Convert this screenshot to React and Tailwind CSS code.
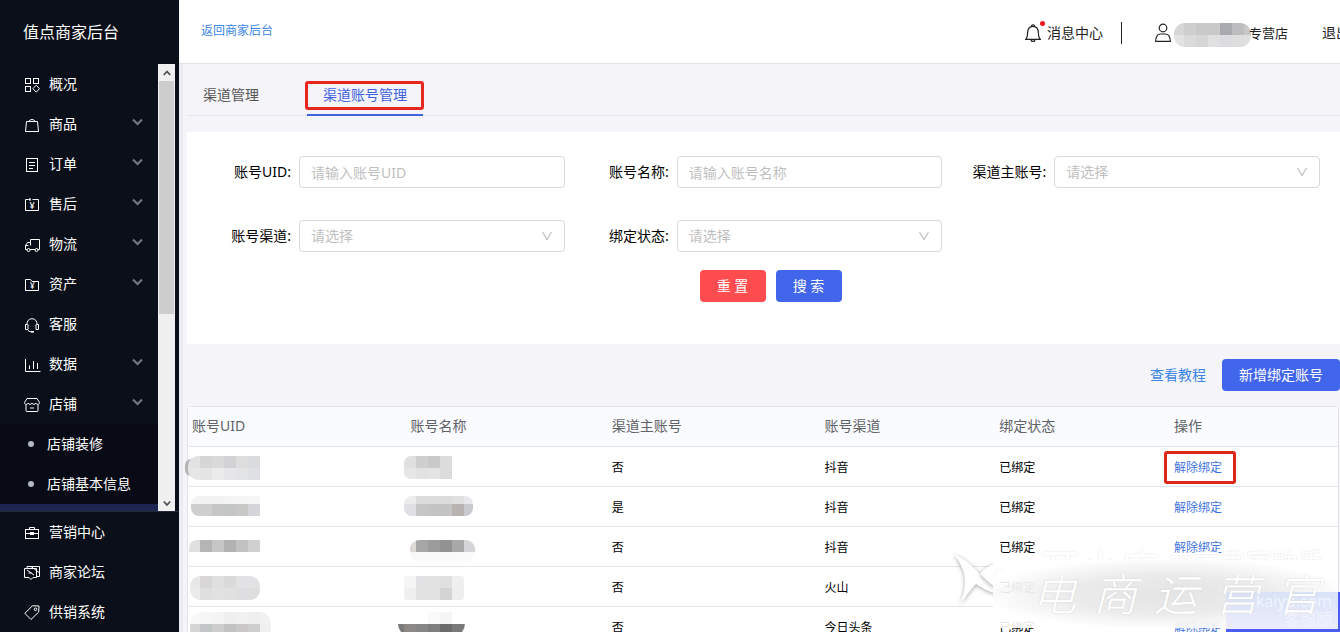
import { useState } from "react";
import clsx from "clsx";

const ICONS = {
  overview: (
    <>
      <rect x="1.5" y="2.5" width="5" height="5" />
      <rect x="9.5" y="2.5" width="5" height="5" />
      <rect x="1.5" y="10.5" width="5" height="5" />
      <path d="M12.2 9.2l3.3 3.5-3.3 3.5-3.3-3.5z" />
    </>
  ),
  goods: (
    <>
      <path d="M2.5 5.5h11l1 10h-13z" />
      <path d="M5 5.5c.3-2.6 5.7-2.6 6 0" />
    </>
  ),
  order: (
    <>
      <rect x="2.5" y="2.5" width="11" height="13" />
      <path d="M5 6.5h6M5 9.5h6M5 12.5h4" />
    </>
  ),
  aftersale: (
    <>
      <path d="M4.5 3.5h-3v11h13v-11h-6M6 2v3M4.5 3.5h2" />
      <text x="8.2" y="12.5" fontSize="9" textAnchor="middle" fill="currentColor" stroke="none">
        ¥
      </text>
    </>
  ),
  logistics: (
    <>
      <path d="M3 13.5H1.500V9.500l2-3H6.500V3.500h9v10H14M6 13.500h5M6.500 6.500v3M1.500 9.500h3" />
      <circle cx="4.500" cy="14" r="1.500" />
      <circle cx="12.500" cy="14" r="1.500" />
    </>
  ),
  assets: (
    <>
      <path d="M1.500 14.500v-11h5l1.500 2h6.500v9z" />
      <text x="8.200" y="13" fontSize="8" textAnchor="middle" fill="currentColor" stroke="none">
        ¥
      </text>
    </>
  ),
  service: (
    <>
      <path d="M3 8.500C2.500 .8 13.500.8 13 8.500M3.500 8.500h-2v5h2.500v-5M12.500 8.500h2v5h-2.500v-5M3.500 13.500c.8 1.600 2 2.200 4 2.200" />
      <path d="M7 15.800h3" strokeWidth="1.600" />
    </>
  ),
  data: <path d="M1.500 3v12.500h15M5.500 13V9.500M9.500 13V5M13.500 13V7" />,
  shop: (
    <>
      <path d="M3 2.500h10l2.500 4c0 2.400-3 2.400-3.700.5-.8 1.900-3 1.900-3.800 0-.8 1.900-3 1.900-3.800 0C3.500 8.900.5 8.900.5 6.500z" />
      <path d="M2 8.500v6.200c0 .6.300.8.800.8h10.400c.5 0 .8-.2.8-.8V8.500M6 12h4" />
    </>
  ),
  marketing: (
    <>
      <rect x="1.500" y="5.500" width="13" height="9" />
      <path d="M5.500 5.500v-2h5v2M1.500 9.500h4.500M10 9.500h4.500" />
      <rect x="6.500" y="8.500" width="3" height="2" fill="currentColor" />
    </>
  ),
  forum: (
    <>
      <path d="M.5 4.500h12v9h-3.500l-2 2-2-2H.5zM3 4.500v-2h12.500v10h-3" />
      <path d="M3 6l7 5M4.500 9h3M7 2.500l8 6" />
    </>
  ),
  supply: (
    <>
      <path d="M8.500 1.800l6.500.2-.3 6L7 15.500.8 9.300z" />
      <circle cx="11.500" cy="5.300" r="1.300" />
    </>
  ),
};

const NAV = [
  { icon: "overview", label: "概况" },
  { icon: "goods", label: "商品", open: true },
  { icon: "order", label: "订单", open: true },
  { icon: "aftersale", label: "售后", open: true },
  { icon: "logistics", label: "物流", open: true },
  { icon: "assets", label: "资产", open: true },
  { icon: "service", label: "客服" },
  { icon: "data", label: "数据", open: true },
  { icon: "shop", label: "店铺", open: true },
];

const SUB_NAV = ["店铺装修", "店铺基本信息"];

const BOTTOM_NAV = [
  { icon: "marketing", label: "营销中心" },
  { icon: "forum", label: "商家论坛" },
  { icon: "supply", label: "供销系统" },
];

// masks: x/y start of each strip, then one colour per 12px block
const ROWS = [
  {
    uid: {
      clip: [0, 9, 90, 24, 10],
      tail: true,
      strips: [
        [0, 9, 12, ["#e2e2e2", "#d6d6d6", "#dadada", "#d2d2d4", "#dedede", "#dadbdd"]],
        [0, 21, 12, ["#e6e6e6", "#e4e4e4", "#ebebeb", "#e6e6e8", "#e2e4e6", "#dfe0e3"]],
      ],
    },
    name: {
      clip: [-3, 9, 60, 23, 7],
      strips: [
        [-3, 9, 12, ["#e0e0e0", "#cfcfcf", "#c9c9c9", "#dcdcdc"]],
        [-3, 21, 11, ["#e6e6e6", "#e2e2e2", "#e4e4e4", "#dcdcdc"]],
      ],
    },
    main: "否",
    channel: "抖音",
    marked: true,
  },
  {
    uid: {
      clip: [3, 9, 90, 20, 8],
      strips: [
        [0, 9, 8, ["#f3f3f3", "#f2f2f2", "#f2f2f2", "#f4f4f4", "#f5f5f5", "#f6f6f6"]],
        [0, 17, 12, ["#cfcfcf", "#cfcfcf", "#c6c6c6", "#c4c6c6", "#c8c8c6", "#d6d6da"]],
      ],
    },
    name: {
      clip: [-3, 9, 69, 20, 8],
      strips: [
        [-3, 9, 8, ["#ececec", "#dcdcdc", "#dcdcdc", "#dcdcdc", "#e0e0e0", "#e8e8ec"]],
        [-3, 17, 12, ["#e0e0e4", "#c6c6c6", "#c4c4c4", "#c4c4c4", "#b8b2b0", "#c9c9d0"]],
      ],
    },
    main: "是",
    channel: "抖音",
  },
  {
    uid: {
      clip: [1, 13, 90, 20, 8],
      strips: [[0, 13, 12, ["#e0e0e0", "#b5b5b5", "#c6c6c6", "#b2b2b2", "#c2c2c2", "#d0d0d0"]]],
    },
    name: {
      clip: [3, 13, 65, 21, 9],
      strips: [
        [-3, 13, 12, ["#dcd8d4", "#a6a6a6", "#9c9c9c", "#929292", "#a8a8a8", "#d6d6d8"]],
        [-3, 25, 9, ["#f8f8f8", "#f9f9f9", "#f9f9f9", "#f9f9f9", "#fafafa", "#fafafa"]],
      ],
    },
    main: "否",
    channel: "抖音",
  },
  {
    uid: {
      clip: [2, 9, 70, 24, 10],
      strips: [
        [0, 9, 12, ["#e8e8e8", "#d8d6d6", "#e0e0e0", "#dadada", "#e2e2e4", "#e2e2e4"]],
        [0, 21, 12, ["#ebebeb", "#dfdfdf", "#e2e2e2", "#e0e0e0", "#dedee0", "#dedede"]],
      ],
    },
    name: {
      clip: [-3, 9, 60, 24, 3],
      strips: [
        [-3, 9, 12, ["#f5f5f5", "#e2e2e4", "#e2e2e2", "#e0e0e0", "#efefef"]],
        [-3, 21, 12, ["#efefef", "#e2e2e2", "#e2e2e2", "#d4d4d4", "#eeeeee"]],
      ],
    },
    main: "否",
    channel: "火山",
  },
  {
    uid: {
      clip: [2, 5, 81, 34, 12],
      strips: [
        [0, 5, 12, ["#f8f8f8", "#f6f6f6", "#f4f4f4", "#efefef", "#f1f1f1", "#efefef", "#f1f1f1"]],
        [0, 17, 12, ["#d6d6d6", "#c2c6c6", "#cdcdcd", "#c2c2c2", "#c9c7c7", "#cecece", "#f0f0f0"]],
      ],
    },
    name: {
      clip: [-9, 5, 67, 24, 12],
      strips: [
        [21, 5, 12, ["#fafafa", "#f5f5f5"]],
        [-15, 17, 12, ["#7a7a7a", "#8c8886", "#868686", "#7e7e7e", "#6c6c6c", "#7a7a7a", "#8a8a8a"]],
      ],
    },
    main: "否",
    channel: "今日头条",
  },
];

const COLUMNS = [
  { title: "账号UID", width: "w-[19%]" },
  { title: "账号名称", width: "w-[17.5%]" },
  { title: "渠道主账号", width: "w-[18.5%]" },
  { title: "账号渠道", width: "w-[15.2%]" },
  { title: "绑定状态", width: "w-[15.2%]" },
  { title: "操作", width: "" },
];

function Icon({ name }) {
  return (
    <svg
      className="size-4 shrink-0 overflow-visible"
      viewBox="0 0 16 16"
      fill="none"
      stroke="currentColor"
      aria-hidden
    >
      {ICONS[name]}
    </svg>
  );
}

function NavItem({ icon, label, open }) {
  return (
    <a href="#" className="flex h-10 shrink-0 items-center gap-[9px] pl-6 pr-[15px] text-white">
      <Icon name={icon} />
      <span>{label}</span>
      {open && (
        <svg
          className="ml-auto h-4 w-[11px] text-[#747982]"
          viewBox="0 0 11 16"
          fill="none"
          stroke="currentColor"
          strokeWidth="2"
          aria-hidden
        >
          <path d="M1 3.500l4.500 4.500L10 3.500" />
        </svg>
      )}
    </a>
  );
}

function Mask({ id, clip, strips, tail, className }) {
  const [x, y, w, h, r] = clip;
  return (
    <svg className={clsx("block overflow-visible", className)} aria-hidden>
      <clipPath id={id}>
        <rect x={x} y={y} width={w} height={h} rx={r} />
      </clipPath>
      {tail && <rect x="-3" y="12" width="12" height="17" rx="6" fill="#b5b5b5" />}
      <g clipPath={`url(#${id})`} shapeRendering="crispEdges">
        {strips.map(([sx, sy, sh, colors]) =>
          colors.map((c, i) => (
            <rect key={`${sy}-${i}`} x={sx + i * 12} y={sy} width="12" height={sh} fill={c} />
          ))
        )}
      </g>
    </svg>
  );
}

function Field({ id, label, children }) {
  return (
    <div className="flex items-center">
      <label htmlFor={id} className="w-28 shrink-0 pr-2 text-right text-black">
        {label}:
      </label>
      <div className="relative flex-1">{children}</div>
    </div>
  );
}

function TextField({ id, label, placeholder }) {
  return (
    <Field id={id} label={label}>
      <input
        id={id}
        type="text"
        placeholder={placeholder}
        className="block h-8 w-full rounded border border-[#d9d9d9] bg-white px-[11px] placeholder:text-[#bfbfbf] focus:border-[#4165eb] focus:outline-none"
      />
    </Field>
  );
}

function SelectField({ id, label }) {
  return (
    <Field id={id} label={label}>
      <select
        id={id}
        defaultValue=""
        className="block h-8 w-full appearance-none rounded border border-[#d9d9d9] bg-white px-[11px] text-[#bfbfbf] focus:border-[#4165eb] focus:outline-none"
      >
        <option value="">请选择</option>
      </select>
      <svg
        className="pointer-events-none absolute right-3 top-[11px] h-[10px] w-3 text-[#bfbfbf]"
        viewBox="0 0 12 10"
        fill="none"
        stroke="currentColor"
        strokeWidth="1.200"
        aria-hidden
      >
        <path d="M1.500 1L6 8.500 10.500 1" />
      </svg>
    </Field>
  );
}

function Sidebar() {
  return (
    <aside className="flex w-[179px] shrink-0 flex-col bg-[#0b0f19] text-sm leading-5 text-white">
      <h1 className="flex h-16 shrink-0 items-center pl-[23px] text-base">值点商家后台</h1>
      <div className="flex h-[447px] shrink-0 pr-1">
        <nav className="flex min-w-0 flex-1 flex-col overflow-hidden">
          {NAV.map((item) => (
            <NavItem key={item.label} {...item} />
          ))}
          {SUB_NAV.map((label) => (
            <a key={label} href="#" className="flex h-10 shrink-0 items-center gap-[13px] bg-[#080b15] pl-7">
              <span className="size-1.5 rounded-full bg-[#b4b8c0]" />
              {label}
            </a>
          ))}
          <div className="h-10 shrink-0 bg-[#1b254f]" />
        </nav>
        <div className="flex w-[17px] shrink-0 flex-col bg-[#f0f0f0] text-[#505050]">
          <button type="button" aria-label="向上滚动" className="grid h-[17px] place-items-center">
            <svg className="h-2 w-2" viewBox="0 0 8 8" fill="none" stroke="currentColor" strokeWidth="1.800" aria-hidden>
              <path d="M.8 6L4 2.500 7.200 6" />
            </svg>
          </button>
          <div className="mx-px h-[233px] bg-[#cdcdcd]" />
          <button type="button" aria-label="向下滚动" className="mt-auto grid h-[17px] place-items-center">
            <svg className="h-2 w-2" viewBox="0 0 8 8" fill="none" stroke="currentColor" strokeWidth="1.800" aria-hidden>
              <path d="M.8 2.500L4 6l3.200-3.500" />
            </svg>
          </button>
        </div>
      </div>
      <nav className="flex-1 border-t border-[#242a38]">
        {BOTTOM_NAV.map((item) => (
          <NavItem key={item.label} {...item} />
        ))}
      </nav>
    </aside>
  );
}

function Header() {
  return (
    <header className="flex h-16 shrink-0 items-center overflow-hidden border-b border-[#e2e2e8] bg-white pl-[22px] text-[#222]">
      <a href="#" className="pb-0.5 text-xs text-[#3b86e6]">
        返回商家后台
      </a>
      <div className="-mr-2.5 ml-auto flex shrink-0 items-center pt-0.5">
        <a href="#" className="flex items-center gap-1.5">
          <span className="relative">
            <svg className="h-5 w-4" viewBox="0 0 16 20" fill="none" stroke="currentColor" strokeWidth="1.200" aria-hidden>
              <path d="M.6 16.400h14.800c-1.800-1.500-1.900-3.400-2-6.400C13.300 5.800 11.500 3.300 8 3.300S2.700 5.800 2.600 10c-.1 3-.2 4.900-2 6.400z" />
              <path d="M6.300 3.300c.2-2 3.200-2 3.400 0M6 16.800c.3 2.200 3.700 2.200 4 0" />
            </svg>
            <span className="absolute -right-1 -top-0.5 size-[5px] rounded-full bg-[#f5151b]" />
          </span>
          消息中心
        </a>
        <span className="ml-[18px] h-[22px] w-px bg-[#222]" />
        <svg className="ml-[33px] h-5 w-4" viewBox="0 0 16 20" fill="none" stroke="currentColor" strokeWidth="1.200" aria-hidden>
          <circle cx="8" cy="5" r="3.800" />
          <path d="M.7 18.400c0-4.500 1.400-7 4.600-7.400h5.400c3.200.4 4.600 2.900 4.600 7.400z" />
        </svg>
        <Mask
          id="mask-shop"
          className="ml-[3px] h-5 w-[75px]"
          clip={[0, 0, 77, 24, 11]}
          strips={[
            [-2, 0, 12, ["#d6d6d6", "#cfcfcf", "#c9c9c9", "#c9c9c9", "#a9a9b0", "#bdbdbf", "#c8c8c8"]],
            [-2, 12, 12, ["#e2e2e4", "#dadada", "#d6d6d6", "#e0e0e0", "#dcdce0", "#dedede", "#e0e0e0"]],
          ]}
        />
        <span className="text-[13px]">专营店</span>
        <a href="#" className="ml-[34px]">
          退出
        </a>
      </div>
    </header>
  );
}

function Watermark() {
  return (
    <div className="pointer-events-none absolute bottom-0 right-0 h-[86px] w-[390px] overflow-hidden" aria-hidden>
      <div className="absolute bottom-0 right-0 h-10 w-[114px] bg-[#4b5df0]" />
      <svg className="absolute left-0 top-1.5 h-[60px] w-16" viewBox="0 0 64 60">
        <path
          d="M4 2c14 6 22 16 28 22 4 4 9 9 16 12v6c-9-2-16-6-22-10C22 36 17 43 10 52c5-12 6-22 4-31C12 14 8 8 4 2z"
          fill="#fff"
          className="drop-shadow-[0_1px_2px_rgba(0,0,0,0.35)]"
        />
        <path
          d="M30 22c4-6 10-10 24-11v4c-8 1-12 5-10 10 1 3 5 6 10 8v6C44 36 37 29 30 22z"
          fill="#fff"
          className="drop-shadow-[0_1px_2px_rgba(0,0,0,0.35)]"
        />
      </svg>
      <div className="absolute left-[90px] top-0 flex items-start gap-2 whitespace-nowrap text-white [text-shadow:0_0_2px_#ddd]">
        <span className="text-[40px] leading-[44px]">开小店</span>
        <span className="text-[26px] leading-[32px]">电商卖家助手</span>
      </div>
      <div className="absolute bottom-1 right-0.5 h-[68px] w-[345px] bg-white/90" />
      <div className="absolute bottom-1 right-0.5 h-[68px] w-[345px] bg-[radial-gradient(ellipse_at_center,#dedede_0%,#e6e6e6_40%,transparent_75%)] opacity-80" />
      <div className="absolute bottom-[3px] right-0.5 h-[37px] w-[112px] bg-linear-to-b from-[#d4e0f8]/80 to-[#ececfb]" />
      <div className="absolute bottom-[4px] right-2 text-right text-base leading-[18px] text-[#f0f4fe]">
        kaiyu.com
        <br />
        客服顺
      </div>
      <div className="absolute bottom-2 right-5 flex gap-[17px] text-[44px] font-light italic leading-[60px] text-white [text-shadow:0_0_2px_#d4d4d4]">
        {["电", "商", "运", "营", "官"].map((c) => (
          <span key={c}>{c}</span>
        ))}
      </div>
    </div>
  );
}

const App = () => {
  const [tab, setTab] = useState("account");

  const tabClass = (key) =>
    clsx(
      "relative -mb-px h-11 border-b-2 px-4 pt-1",
      tab === key ? "border-[#3f63e0] text-[#3f63e0]" : "border-transparent text-[#555]"
    );

  return (
    <div className="relative flex h-screen overflow-hidden bg-[#f4f4f9] font-['Noto_Sans','Noto_Sans_CJK_SC',sans-serif] text-sm leading-5">
      <Sidebar />
      <div className="flex min-w-0 flex-1 flex-col">
        <Header />
        <main className="flex-1 overflow-hidden border-l-4 border-[#ebebf4] pl-1">
          <div className="flex gap-8 border-b border-[#e4e5ec] pt-2" role="tablist">
            <button type="button" role="tab" aria-selected={tab === "channel"} className={tabClass("channel")} onClick={() => setTab("channel")}>
              渠道管理
            </button>
            <button type="button" role="tab" aria-selected={tab === "account"} className={tabClass("account")} onClick={() => setTab("account")}>
              渠道账号管理
              <span className="absolute -left-0.5 -right-px bottom-1 top-[9px] rounded-[3px] border-[3px] border-[#e8281e]" />
            </button>
          </div>

          <form className="mt-4 bg-white pb-[42px] pr-5 pt-6" onSubmit={(e) => e.preventDefault()}>
            <div className="grid grid-cols-3 gap-y-8">
              <TextField id="uid" label="账号UID" placeholder="请输入账号UID" />
              <TextField id="name" label="账号名称" placeholder="请输入账号名称" />
              <SelectField id="main" label="渠道主账号" />
              <SelectField id="channel" label="账号渠道" />
              <SelectField id="status" label="绑定状态" />
            </div>
            <div className="mt-[18px] flex justify-center gap-2.5 pl-[34px] text-white">
              <button type="reset" className="h-8 w-[66px] rounded bg-[#ff4d4f]">
                重 置
              </button>
              <button type="submit" className="h-8 w-[66px] rounded bg-[#4165eb]">
                搜 索
              </button>
            </div>
          </form>

          <div className="flex items-center justify-end gap-4 py-[15px]">
            <a href="#" className="text-[#3b86e6]">
              查看教程
            </a>
            <button type="button" className="h-8 rounded bg-[#4165eb] px-[17px] text-white">
              新增绑定账号
            </button>
          </div>

          <div className="mr-px rounded-t border border-[#e2e3e9] bg-white">
            <table className="w-full table-fixed text-left">
              <thead>
                <tr className="h-[39px] border-b border-[#e4e5ea] bg-[#fafbfe] text-[#606266]">
                  {COLUMNS.map((col) => (
                    <th key={col.title} className={clsx("p-0 pl-1 font-normal", col.width)}>
                      {col.title}
                    </th>
                  ))}
                </tr>
              </thead>
              <tbody className="text-xs text-black">
                {ROWS.map((row, i) => (
                  <tr key={i} className="h-10 border-b border-[#e4e5ea]">
                    <td className="p-0">
                      <Mask id={`mask-uid-${i}`} className="h-[39px] w-[90px]" {...row.uid} />
                    </td>
                    <td className="p-0">
                      <Mask id={`mask-name-${i}`} className="h-[39px] w-[90px]" {...row.name} />
                    </td>
                    <td className="p-0 pl-1 pt-1">{row.main}</td>
                    <td className="p-0 pl-1 pt-1">{row.channel}</td>
                    <td className="p-0 pl-1 pt-1">已绑定</td>
                    <td className="p-0 pl-1 pt-1">
                      <a href="#" className="relative text-[#3f74e0]">
                        解除绑定
                        {row.marked && (
                          <span className="absolute -inset-y-2 -left-2.5 -right-3.5 rounded-[3px] border-[3px] border-[#e0251c]" />
                        )}
                      </a>
                    </td>
                  </tr>
                ))}
              </tbody>
            </table>
          </div>
        </main>
      </div>
      <Watermark />
    </div>
  );
};

export default App;
